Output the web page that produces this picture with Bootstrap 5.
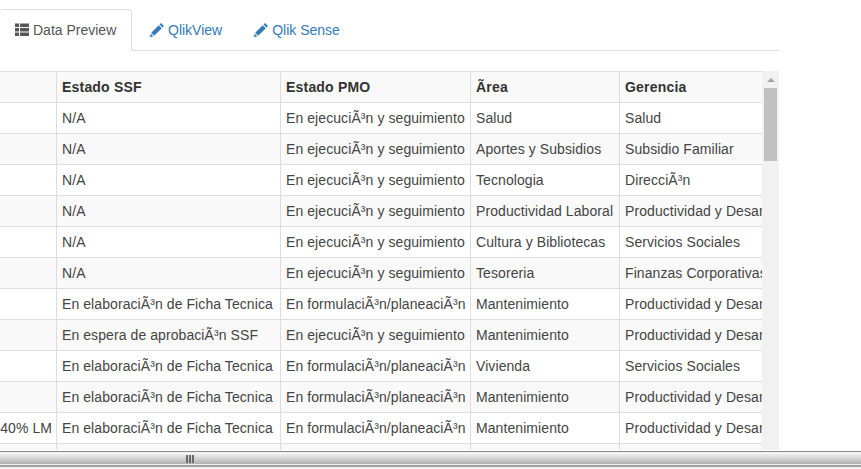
<!DOCTYPE html>
<html lang="es">
  <head>
    <meta charset="UTF-8" />
    <title>Data Preview</title>
    <link
      rel="stylesheet"
      href="https://cdn.jsdelivr.net/npm/bootstrap@5.3.0/dist/css/bootstrap.min.css"
    />
    <style>
      html, body { height: 469px; overflow: hidden; }
      body {
        font-family: "Liberation Sans", Arial, sans-serif;
        font-size: 14px;
        color: #333;
        display: flex;
        flex-direction: column;
      }
      #page-main { width: 779px; height: 451px; padding-top: 9px; overflow: hidden; flex: none; }
      #tabs { border-bottom: 1px solid #ddd; height: 42px; flex-wrap: nowrap; }
      #tabs .nav-link {
        height: 42px;
        padding: 11px 15px 10px;
        line-height: 20px;
        color: #337ab7;
        border: 0;
        border-radius: 4px 4px 0 0;
        margin-right: 2px;
        white-space: nowrap;
      }
      #tabs .nav-link.active {
        color: #555;
        background: #fff;
        border: 1px solid #ddd;
        border-left: 0;
        border-bottom-color: #fff;
        padding-top: 10px;
        margin-right: 3px;
        width: 132px;
      }
      #tabs svg { width: 14px; height: 14px; vertical-align: -2px; margin-right: 4px; fill: currentColor; }
      #table-area { display: flex; margin-top: 20px; height: 379px; }
      #table-clip { width: 762px; overflow: hidden; flex: none; }
      #data-table {
        table-layout: fixed;
        width: 820px;
        margin: 0;
        border-collapse: separate;
        border-spacing: 0;
        border-top: 1px solid #ddd;
      }
      #data-table th, #data-table td {
        height: 31px;
        padding: 5px;
        line-height: 20px;
        border: 1px solid #ddd;
        border-width: 0 1px 1px 0;
        white-space: nowrap;
        overflow: hidden;
        box-shadow: none;
        background: #fff;
        color: #444;
        letter-spacing: 0.08px;
      }
      #data-table th { background: #f9f9f9; color: #333; letter-spacing: 0.2px; }
      #data-table tbody tr:nth-child(even) td { background: #f9f9f9; }
      #data-table td:first-child { text-align: right; padding-right: 4px; padding-left: 0; }
      #fake-scroll { width: 17px; background: #f1f1f1; flex: none; padding: 0 2px; }
      #fake-scroll .up-arrow {
        width: 0;
        margin: 7px auto 6px;
        border: 4px solid transparent;
        border-top: 0;
        border-bottom: 4px solid #a3a3a3;
      }
      #fake-scroll .thumb { height: 73px; background: #c1c1c1; }
      #splitter {
        height: 18px;
        flex: none;
        border-top: 1px solid #8a8a8a;
        border-bottom: 2px solid #f0f0f0;
        box-shadow: inset 0 -2px 0 #a0a0a0;
        background: linear-gradient(#f2f2f2, #f2f2f2 10%, #b0b0b0 80%, #f0f0f0 80%);
        padding: 3px 0 0 186px;
      }
      #splitter-grip { display: flex; gap: 1px; }
      #splitter-grip i { display: block; width: 2px; height: 8px; background: #6a6a6a; }
    </style>
  </head>
  <body>
    <main id="page-main">
      <ul id="tabs" class="nav">
        <li class="nav-item">
          <a class="nav-link active" href="#">
            <svg viewBox="0 0 14 14"><path d="M0 0.500h4v3.500H0zM5 0.500h9v3.500H5zM0 5h4v3.500H0zM5 5h9v3.500H5zM0 9.500h4V13H0zM5 9.500h9V13H5z" /></svg>Data Preview
          </a>
        </li>
        <li class="nav-item">
          <a class="nav-link" href="#">
            <svg viewBox="0 0 14 14"><path d="M11 0l3 3-1.500 1.500-3-3zM8.800 2.200l3 3-7.600 7.600-3-3zM0.600 10.600l2.800 2.800L0 14z" /></svg>QlikView
          </a>
        </li>
        <li class="nav-item">
          <a class="nav-link" href="#">
            <svg viewBox="0 0 14 14"><path d="M11 0l3 3-1.500 1.500-3-3zM8.800 2.200l3 3-7.600 7.600-3-3zM0.600 10.600l2.800 2.800L0 14z" /></svg>Qlik Sense
          </a>
        </li>
      </ul>

      <div id="table-area">
        <div id="table-clip">
          <table id="data-table" class="table">
            <colgroup>
              <col style="width: 57px" />
              <col style="width: 224px" />
              <col style="width: 190px" />
              <col style="width: 149px" />
              <col style="width: 200px" />
            </colgroup>
            <thead>
              <tr>
                <th></th>
                <th>Estado SSF</th>
                <th>Estado PMO</th>
                <th>Ãrea</th>
                <th>Gerencia</th>
              </tr>
            </thead>
            <tbody id="rows"></tbody>
          </table>
        </div>
        <div id="fake-scroll">
          <div class="up-arrow"></div>
          <div class="thumb"></div>
        </div>
      </div>
    </main>
    <div id="splitter">
      <div id="splitter-grip"><i></i><i></i><i></i></div>
    </div>

    <script src="https://cdn.jsdelivr.net/npm/bootstrap@5.3.0/dist/js/bootstrap.bundle.min.js"></script>
    <script>
      const seg = "En ejecuciÃ³n y seguimiento";
      const form = "En formulaciÃ³n/planeaciÃ³n";
      const ficha = "En elaboraciÃ³n de Ficha Tecnica";
      const prod = "Productividad y Desarrollo";
      const data = [
        ["", "N/A", seg, "Salud", "Salud"],
        ["", "N/A", seg, "Aportes y Subsidios", "Subsidio Familiar"],
        ["", "N/A", seg, "Tecnologia", "DirecciÃ³n"],
        ["", "N/A", seg, "Productividad Laboral", prod],
        ["", "N/A", seg, "Cultura y Bibliotecas", "Servicios Sociales"],
        ["", "N/A", seg, "Tesoreria", "Finanzas Corporativas"],
        ["", ficha, form, "Mantenimiento", prod],
        ["", "En espera de aprobaciÃ³n SSF", seg, "Mantenimiento", prod],
        ["", ficha, form, "Vivienda", "Servicios Sociales"],
        ["", ficha, form, "Mantenimiento", prod],
        ["40% LM", ficha, form, "Mantenimiento", prod],
        ["", "", "", "", ""],
      ];
      document.getElementById("rows").innerHTML = data
        .map((r) => `<tr>${r.map((c) => `<td>${c}</td>`).join("")}</tr>`)
        .join("");
    </script>
  </body>
</html>
